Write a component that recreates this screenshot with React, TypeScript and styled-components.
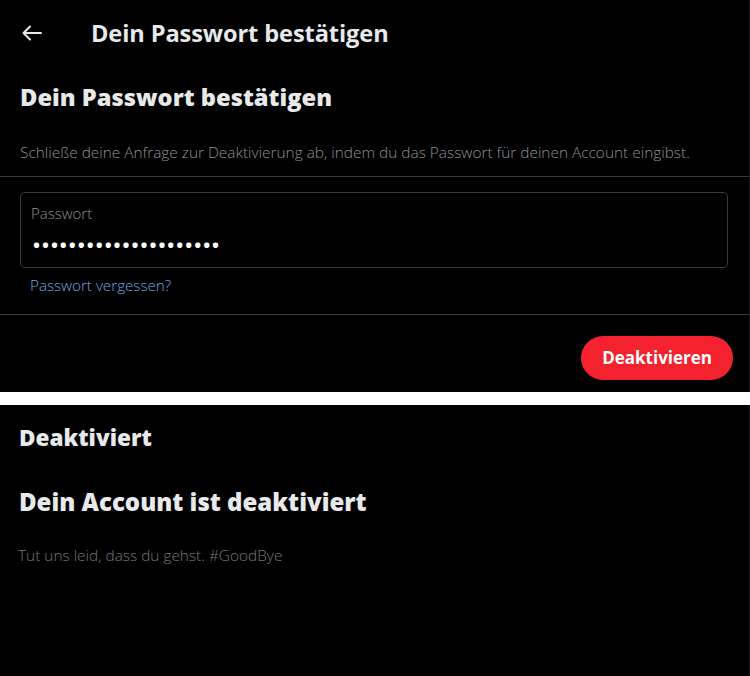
import React from 'react';
import styled, { createGlobalStyle } from 'styled-components';

const GlobalStyle = createGlobalStyle`
  html, body {
    margin: 0;
    padding: 0;
    background: #000;
  }
  body {
    font-family: 'Open Sans', 'Noto Sans', sans-serif;
    color: #e7e9ea;
  }
`;

const Page = styled.div`
  display: flex;
  flex-direction: column;
  gap: 13px;
  background: #fff;
  width: 750px;
  min-height: 676px;
`;

const Panel = styled.section<{ $grow?: boolean }>`
  background: #000;
  display: flex;
  flex-direction: column;
  flex: ${(p) => (p.$grow ? '1' : 'none')};
  border-right: 1px solid #16181a;
`;

const Header = styled.header`
  display: flex;
  align-items: center;
  height: 66px;
  padding-left: 22px;
  gap: 49px;
`;

const BackButton = styled.button`
  display: flex;
  align-items: center;
  justify-content: center;
  padding: 0;
  border: 0;
  background: transparent;
  color: #e7e9ea;
  cursor: pointer;
`;

const HeaderTitle = styled.h1`
  margin: 0;
  font-size: 23.6px;
  font-weight: 700;
  letter-spacing: -0.1px;
`;

const Section = styled.div`
  padding: 16px 20px 0;
`;

const Heading = styled.h2<{ $size?: number }>`
  margin: 0;
  font-size: ${(p) => p.$size ?? 23.7}px;
  font-weight: 800;
  line-height: 1.3;
`;

const Description = styled.p`
  margin: 0;
  font-size: 15.4px;
  line-height: 21px;
  font-weight: 300;
  color: #8e9195;
`;

const Divider = styled.hr`
  margin: 0;
  border: 0;
  border-top: 1px solid #3a3d40;
`;

const Field = styled.label`
  display: flex;
  flex-direction: column;
  gap: 14px;
  margin: 15px 21px 0 20px;
  height: 76px;
  box-sizing: border-box;
  padding: 10px 10px 0;
  border: 1px solid #3a3d40;
  border-radius: 5px;
`;

const FieldLabel = styled.span`
  font-size: 15px;
  line-height: 20px;
  font-weight: 300;
  color: #8e9195;
`;

const Dots = styled.span`
  padding-left: 2px;
  font-size: 18.5px;
  font-weight: 700;
  letter-spacing: 2px;
  color: #fff;
  line-height: 16px;
`;

const ForgotLink = styled.a`
  display: block;
  margin: 7px 0 19px 30px;
  font-size: 15.2px;
  line-height: 20px;
  font-weight: 300;
  color: #6da7e3;
  text-decoration: none;
`;

const Actions = styled.div`
  display: flex;
  justify-content: flex-end;
  padding: 21px 16px 12px;
`;

const DangerButton = styled.button`
  height: 44px;
  padding: 0 21px;
  border: 0;
  border-radius: 22px;
  background: #f4212e;
  color: #fff;
  font-family: 'Open Sans', 'Noto Sans', sans-serif;
  font-size: 17px;
  font-weight: 700;
  cursor: pointer;
`;

const BottomBody = styled.div`
  display: flex;
  flex-direction: column;
  padding: 18px 19px 0;
`;

const Spacer = styled.div<{ $h: number }>`
  height: ${(p) => p.$h}px;
`;

const Note = styled.p`
  margin: 0 0 0 -1px;
  font-size: 15.4px;
  line-height: 21px;
  font-weight: 300;
  color: #74777b;
`;

const BackArrow = () => (
  <svg width="20" height="16" viewBox="0 0 20 16" fill="none" stroke="currentColor" strokeWidth="2" strokeLinecap="round" strokeLinejoin="round">
    <path d="M19 8H2" />
    <path d="M8 1.5L1.5 8 8 14.5" />
  </svg>
);

export default function App() {
  return (
    <>
      <GlobalStyle />
      <Page>
        <Panel>
          <Header>
            <BackButton type="button" aria-label="Zurück">
              <BackArrow />
            </BackButton>
            <HeaderTitle>Dein Passwort bestätigen</HeaderTitle>
          </Header>
          <Section>
            <Heading>Dein Passwort bestätigen</Heading>
            <Spacer $h={29} />
            <Description>
              Schließe deine Anfrage zur Deaktivierung ab, indem du das Passwort für deinen Account eingibst.
            </Description>
            <Spacer $h={13} />
          </Section>
          <Divider />
          <Field>
            <FieldLabel>Passwort</FieldLabel>
            <Dots>{'•'.repeat(21)}</Dots>
          </Field>
          <ForgotLink href="#">Passwort vergessen?</ForgotLink>
          <Divider />
          <Actions>
            <DangerButton type="button">Deaktivieren</DangerButton>
          </Actions>
        </Panel>
        <Panel $grow>
          <BottomBody>
            <Heading $size={22.5}>Deaktiviert</Heading>
            <Spacer $h={34} />
            <Heading $size={24}>Dein Account ist deaktiviert</Heading>
            <Spacer $h={28} />
            <Note>Tut uns leid, dass du gehst. #GoodBye</Note>
          </BottomBody>
        </Panel>
      </Page>
    </>
  );
}
